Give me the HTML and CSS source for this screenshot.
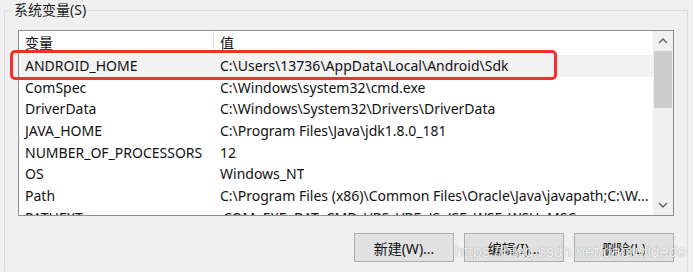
FILE: index.html
```html
<!DOCTYPE html>
<html lang="zh-CN">
<head>
<meta charset="UTF-8">
<title>系统变量</title>
<link rel="stylesheet" href="styles.css">
</head>
<body>
<fieldset class="group">
    <legend>系统变量(S)</legend>
    <div class="list">
        <div class="rows">
            <div class="row head"><span class="name">变量</span><span class="value">值</span></div>
            <div class="row sel"><span class="name">ANDROID_HOME</span><span class="value">C:\Users\13736\AppData\Local\Android\Sdk</span></div>
            <div class="row"><span class="name">ComSpec</span><span class="value">C:\Windows\system32\cmd.exe</span></div>
            <div class="row"><span class="name">DriverData</span><span class="value">C:\Windows\System32\Drivers\DriverData</span></div>
            <div class="row"><span class="name">JAVA_HOME</span><span class="value">C:\Program Files\Java\jdk1.8.0_181</span></div>
            <div class="row"><span class="name">NUMBER_OF_PROCESSORS</span><span class="value">12</span></div>
            <div class="row"><span class="name">OS</span><span class="value">Windows_NT</span></div>
            <div class="row"><span class="name">Path</span><span class="value">C:\Program Files (x86)\Common Files\Oracle\Java\javapath;C:\W...</span></div>
            <div class="row"><span class="name">PATHEXT</span><span class="value">.COM;.EXE;.BAT;.CMD;.VBS;.VBE;.JS;.JSE;.WSF;.WSH;.MSC</span></div>
        </div>
        <div class="scrollbar">
            <span class="arrow"><svg width="10" height="6" viewBox="0 0 10 6"><path d="M1 5 L5 1 L9 5" fill="none" stroke="#606060" stroke-width="1.4"/></svg></span>
            <span class="thumb"></span>
            <span class="track"></span>
            <span class="arrow"><svg width="10" height="6" viewBox="0 0 10 6"><path d="M1 1 L5 5 L9 1" fill="none" stroke="#606060" stroke-width="1.4"/></svg></span>
        </div>
    </div>
    <div class="buttons">
        <button>新建(W)...</button>
        <button>编辑(I)...</button>
        <button>删除(L)</button>
    </div>
</fieldset>

<!-- red marker drawn over the first row -->
<div class="marker"></div>
<div class="watermark">https://blog.csdn.net/dabudidede</div>
</body>
</html>
```

FILE: styles.css
```css
body {
    margin: 0;
    width: 693px;
    height: 272px;
    overflow: hidden;
    background-color: #f0f0f0;
    font-family: "Noto Sans", "Noto Sans CJK SC", sans-serif;
    font-size: 14px;
    color: #111;
    position: relative;
}

.group {
    margin: 0 0 0 4px;
    padding: 0 13px 10px 13px;
    width: 684px;
    box-sizing: border-box;
    border: 1px solid #dcdcdc;
    border-bottom: none;
    border-radius: 2px;
}

.group legend {
    margin-left: -6px;
    padding: 0 2px;
    line-height: 20px;
    color: #222;
}

.list {
    display: flex;
    height: 186px;
    margin-top: 10px;
    box-sizing: border-box;
    border: 1px solid #8a8f96;
    background-color: #fff;
}

.rows {
    flex: 1;
    overflow: hidden;
}

.row {
    display: flex;
    height: 21.7px;
    line-height: 20px;
    align-items: center;
    white-space: nowrap;
}

.row.head {
    height: 24px;
}

.row.sel {
    background-color: #f2f2f2;
}

.name {
    width: 195px;
    padding-left: 6px;
    box-sizing: border-box;
    flex-shrink: 0;
}

.value {
    padding-left: 6px;
    overflow: hidden;
}

.head .name {
    height: 100%;
    display: flex;
    align-items: center;
    border-right: 1px solid #e5e5e5;
}

.scrollbar {
    width: 20px;
    display: flex;
    flex-direction: column;
    background-color: #f0f0f0;
}

.arrow {
    height: 20px;
    display: flex;
    align-items: center;
    justify-content: center;
}

.thumb {
    height: 57px;
    margin: 0 1px;
    background-color: #cdcdcd;
}

.track {
    flex: 1;
}

.buttons {
    display: flex;
    justify-content: flex-end;
    gap: 10px;
    margin-top: 17px;
}

button {
    width: 100px;
    height: 29px;
    padding: 0;
    font-family: inherit;
    font-size: 14px;
    color: #111;
    background-color: #e1e1e1;
    border: 1px solid #adadad;
}

.marker {
    position: absolute;
    left: 10px;
    top: 50px;
    width: 547px;
    height: 30px;
    box-sizing: border-box;
    border: 3px solid #f5302c;
    border-radius: 5px;
}

.watermark {
    position: absolute;
    left: 455px;
    top: 243px;
    font-family: "Liberation Sans", sans-serif;
    font-size: 16px;
    color: rgba(255, 255, 255, 0.9);
    text-shadow: 0 0 1px rgba(0, 0, 0, 0.45);
    white-space: nowrap;
}
```
